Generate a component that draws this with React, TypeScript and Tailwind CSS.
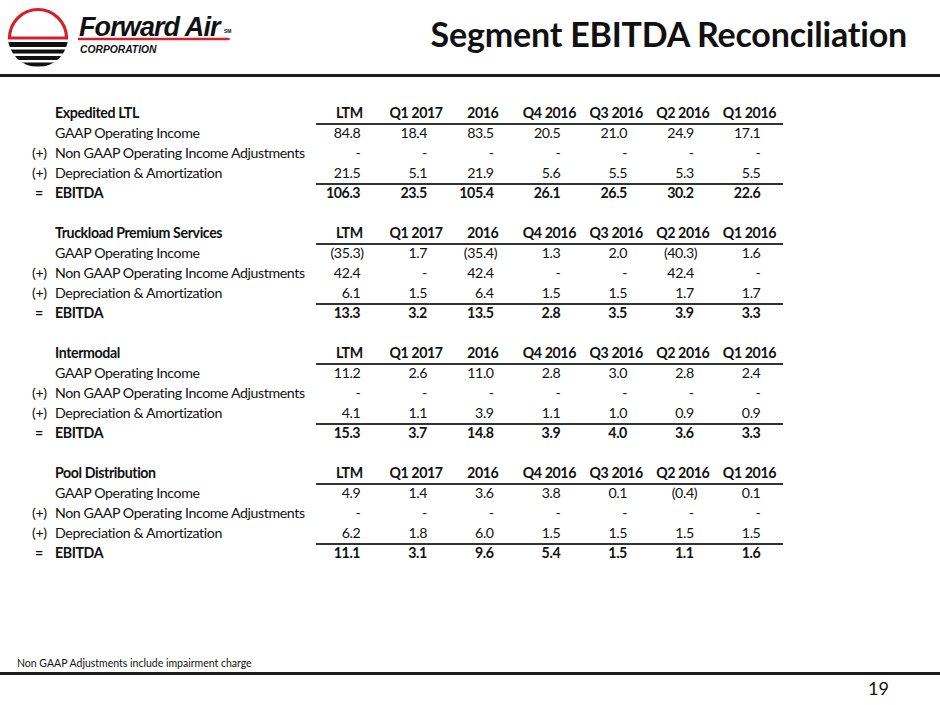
import React from "react";

type Section = {
  name: string;
  gaap: string[];
  adj: string[];
  da: string[];
  ebitda: string[];
};

const dash = ["-", "-", "-", "-", "-", "-", "-"];

const sections: Section[] = [
  {
    name: "Expedited LTL",
    gaap: ["84.8", "18.4", "83.5", "20.5", "21.0", "24.9", "17.1"],
    adj: dash,
    da: ["21.5", "5.1", "21.9", "5.6", "5.5", "5.3", "5.5"],
    ebitda: ["106.3", "23.5", "105.4", "26.1", "26.5", "30.2", "22.6"],
  },
  {
    name: "Truckload Premium Services",
    gaap: ["(35.3)", "1.7", "(35.4)", "1.3", "2.0", "(40.3)", "1.6"],
    adj: ["42.4", "-", "42.4", "-", "-", "42.4", "-"],
    da: ["6.1", "1.5", "6.4", "1.5", "1.5", "1.7", "1.7"],
    ebitda: ["13.3", "3.2", "13.5", "2.8", "3.5", "3.9", "3.3"],
  },
  {
    name: "Intermodal",
    gaap: ["11.2", "2.6", "11.0", "2.8", "3.0", "2.8", "2.4"],
    adj: dash,
    da: ["4.1", "1.1", "3.9", "1.1", "1.0", "0.9", "0.9"],
    ebitda: ["15.3", "3.7", "14.8", "3.9", "4.0", "3.6", "3.3"],
  },
  {
    name: "Pool Distribution",
    gaap: ["4.9", "1.4", "3.6", "3.8", "0.1", "(0.4)", "0.1"],
    adj: dash,
    da: ["6.2", "1.8", "6.0", "1.5", "1.5", "1.5", "1.5"],
    ebitda: ["11.1", "3.1", "9.6", "5.4", "1.5", "1.1", "1.6"],
  },
];

const columns = ["LTM", "Q1 2017", "2016", "Q4 2016", "Q3 2016", "Q2 2016", "Q1 2016"];

const grid =
  "grid grid-cols-[23px_261px_repeat(7,66.7px)] h-[20px] leading-[20px] whitespace-nowrap";

function Num({ v, line }: { v: string; line?: boolean }) {
  const neg = v.startsWith("(");
  return (
    <div className={`text-right pr-[19px] ${line ? "border-b-2 border-[#333]" : ""}`}>
      {v}
      {!neg && <span className="invisible">)</span>}
    </div>
  );
}

function Logo() {
  return (
    <svg width="240" height="70" viewBox="0 0 240 70" className="block">
      <defs>
        <clipPath id="disc">
          <circle cx="38" cy="37" r="30" />
        </clipPath>
      </defs>
      <path d="M9.5 38 A28.5 28.5 0 0 1 66.5 38 Z" fill="none" stroke="#d5202a" strokeWidth="3.2" />
      <g clipPath="url(#disc)" fill="#111">
        <rect x="0" y="42" width="80" height="5" />
        <rect x="0" y="49.5" width="80" height="4" />
        <rect x="0" y="56" width="80" height="4" />
        <rect x="0" y="62.5" width="80" height="4" />
      </g>
      <polygon points="78,37.8 228,37.8 231,39 228,40.2 78,40.2" fill="#d5202a" />
      <text
        x="79"
        y="35.5"
        fontFamily="'Liberation Sans', Arial, sans-serif"
        fontWeight="900"
        fontStyle="italic"
        fontSize="27"
        letterSpacing="-0.9"
        fill="#111"
      >
        Forward Air
      </text>
      <text
        x="224"
        y="33"
        fontFamily="'Liberation Sans', Arial, sans-serif"
        fontSize="5"
        fontWeight="700"
        fill="#111"
      >
        SM
      </text>
      <text
        x="80"
        y="53"
        fontFamily="'Liberation Sans', Arial, sans-serif"
        fontWeight="700"
        fontStyle="italic"
        fontSize="10.3"
        fill="#111"
      >
        CORPORATION
      </text>
    </svg>
  );
}

export default function App() {
  return (
    <div className="w-[940px] h-[705px] bg-white flex flex-col text-[#111] font-['Lato',sans-serif] overflow-hidden">
      {/* header */}
      <div className="h-[74px] flex items-start justify-between">
        <Logo />
        <h1 className="mt-[12px] mr-[33px] text-[34px] leading-[44px] font-bold tracking-[-0.2px]">
          Segment EBITDA Reconciliation
        </h1>
      </div>
      <div className="h-[3px] bg-[#1c1c1c]" />

      {/* table */}
      <div className="pt-[26px] pl-[32px] text-[14.2px] tracking-[-0.4px]">
        {sections.map((s) => (
          <div key={s.name} className="mb-[20px]">
            <div className={`${grid} font-bold`}>
              <div />
              <div>{s.name}</div>
              {columns.map((c) => (
                <div key={c} className="text-center border-b-2 border-[#333]">
                  {c}
                </div>
              ))}
            </div>
            <div className={grid}>
              <div />
              <div>GAAP Operating Income</div>
              {s.gaap.map((v, i) => (
                <Num key={i} v={v} />
              ))}
            </div>
            <div className={grid}>
              <div>(+)</div>
              <div>Non GAAP Operating Income Adjustments</div>
              {s.adj.map((v, i) => (
                <Num key={i} v={v} />
              ))}
            </div>
            <div className={grid}>
              <div>(+)</div>
              <div>Depreciation &amp; Amortization</div>
              {s.da.map((v, i) => (
                <Num key={i} v={v} line />
              ))}
            </div>
            <div className={`${grid} font-bold`}>
              <div className="pl-[3px]">=</div>
              <div>EBITDA</div>
              {s.ebitda.map((v, i) => (
                <Num key={i} v={v} />
              ))}
            </div>
          </div>
        ))}
      </div>

      {/* footer */}
      <div className="mt-auto">
        <div className="pl-[17px] text-[10.5px] leading-[12px]">
          Non GAAP Adjustments include impairment charge
        </div>
        <div className="mt-[3px] h-[3px] bg-[#1c1c1c]" />
        <div className="h-[26px] flex items-center justify-end pr-[51px] text-[18px]">19</div>
        <div className="h-[4px]" />
      </div>
    </div>
  );
}
